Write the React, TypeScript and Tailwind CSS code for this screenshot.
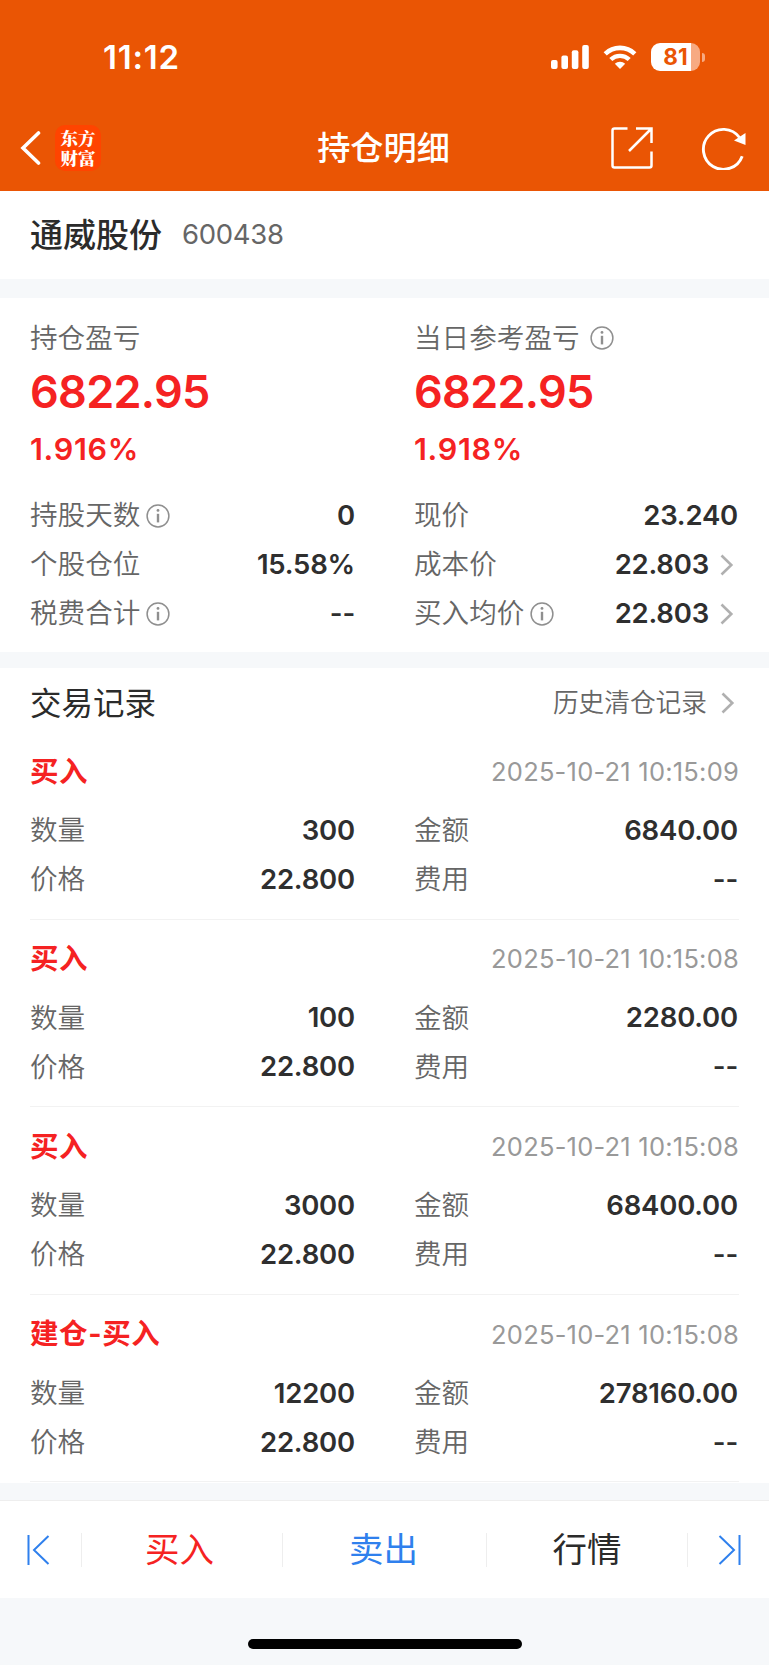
import type { ReactNode } from "react";

type TradeRecord = {
  id: number;
  type: string;
  time: string;
  count: string;
  price: string;
  amount: string;
  fee: string;
};

const records: TradeRecord[] = [
  { id: 1, type: "买入", time: "2025-10-21 10:15:09", count: "300", price: "22.800", amount: "6840.00", fee: "--" },
  { id: 2, type: "买入", time: "2025-10-21 10:15:08", count: "100", price: "22.800", amount: "2280.00", fee: "--" },
  { id: 3, type: "买入", time: "2025-10-21 10:15:08", count: "3000", price: "22.800", amount: "68400.00", fee: "--" },
  { id: 4, type: "建仓-买入", time: "2025-10-21 10:15:08", count: "12200", price: "22.800", amount: "278160.00", fee: "--" },
];

function InfoIcon({ className = "" }: { className?: string }) {
  return (
    <svg className={className} width="24" height="24" viewBox="0 0 24 24" fill="none">
      <circle cx="12" cy="12" r="10.9" stroke="#8f8f8f" strokeWidth="1.5" />
      <circle cx="12" cy="6.4" r="1.4" fill="#8f8f8f" />
      <path d="M12 9.8V18.4" stroke="#8f8f8f" strokeWidth="2.4" />
    </svg>
  );
}

function ChevronIcon({ className = "" }: { className?: string }) {
  return (
    <svg className={className} width="14" height="22" viewBox="0 0 14 22" fill="none">
      <path d="M1.5 1.5L11.3 11L1.5 20.5" stroke="#b0b0b0" strokeWidth="2.6" />
    </svg>
  );
}

function StatusBar() {
  return (
    <div className="flex h-[105px] items-start justify-between pt-[41px] pr-[64px] pl-[103px]">
      <div className="text-[33px] leading-8 font-semibold tracking-[0.8px]">11:12</div>
      <div className="flex h-8 items-center">
        <svg width="38" height="24" viewBox="0 0 38 24" fill="#fff">
          <rect x="0" y="15" width="6.6" height="9" rx="2" />
          <rect x="10.4" y="10.5" width="6.6" height="13.5" rx="2" />
          <rect x="20.8" y="5.3" width="6.6" height="18.7" rx="2" />
          <rect x="31.2" y="0" width="6.6" height="24" rx="2" />
        </svg>
        <svg className="ml-[14px]" width="34" height="24" viewBox="0 0 34 24">
          <path d="M2.2 8.8A21.4 21.4 0 0 1 31.8 8.8" fill="none" stroke="#fff" strokeWidth="4.6" />
          <path d="M7.8 14.5A13.4 13.4 0 0 1 26.2 14.5" fill="none" stroke="#fff" strokeWidth="4.4" />
          <path d="M17 24L11.8 18.8A7.4 7.4 0 0 1 22.2 18.8Z" fill="#fff" />
        </svg>
        <div className="ml-[14px] flex h-7 w-[49px] items-center justify-center rounded-[9px] bg-[linear-gradient(90deg,#fff_82%,#f7aa82_82%)] text-[22.5px] leading-7 font-bold text-[#ea5504]">
          81
        </div>
        <div className="ml-[2px] h-[9px] w-[3px] rounded-r-full bg-[#f7aa82]" />
      </div>
    </div>
  );
}

function NavBar() {
  return (
    <div className="flex h-[86px] items-center justify-between pr-[22px] pl-[20px]">
      <div className="flex w-[160px] items-center">
        <svg width="21" height="34" viewBox="0 0 21 34" fill="none">
          <path d="M18.5 2L3 17L18.5 32" stroke="#fff" strokeWidth="3.6" strokeLinecap="round" />
        </svg>
        <div className="ml-[14px] flex h-[46px] w-[46px] items-center justify-center rounded-[10px] bg-[#ff4400] pb-px font-['Noto_Serif_CJK_SC','Noto_Sans_CJK_SC',serif] text-[17.5px] leading-[19.5px] font-black">
          <p className="w-[36px] text-center break-all">东方财富</p>
        </div>
      </div>
      <div className="text-[33.2px] leading-10 font-medium">持仓明细</div>
      <div className="flex w-[160px] items-center justify-end">
        <svg width="44" height="44" viewBox="0 0 44 44" fill="none" stroke="#fff" strokeWidth="2.5">
          <path d="M17.5 2.5H4.5Q2.5 2.5 2.500 4.500V39.500Q2.500 41.500 4.500 41.500H39.500Q41.500 41.500 41.500 39.500V25.500" />
          <path d="M26 2.500H41.500V17M41 3L19 25" />
        </svg>
        <svg className="ml-[47px]" width="46" height="44" viewBox="0 0 46 44" fill="none">
          <path d="M41.200 30.200A20 20 0 1 1 38.500 11.500" stroke="#fff" strokeWidth="2.900" />
          <path d="M44.500 7V19L33 14.500Z" fill="#fff" />
        </svg>
      </div>
    </div>
  );
}

type FieldProps = {
  label: string;
  value: string;
  info?: boolean;
  arrow?: boolean;
};

function Field({ label, value, info, arrow }: FieldProps) {
  return (
    <div className="flex h-[49px] items-center">
      <span className="pt-px text-[27.6px] font-[350] text-[#666666]">{label}</span>
      {info && <InfoIcon className="mt-px ml-[6px]" />}
      <span className="ml-auto text-[27.5px] font-semibold tracking-[-0.2px] text-[#2f2f2f]">{value}</span>
      {arrow && <ChevronIcon className="mr-[4px] ml-[11px]" />}
    </div>
  );
}

type ProfitProps = {
  label: ReactNode;
  value: string;
  percent: string;
};

function Profit({ label, value, percent }: ProfitProps) {
  return (
    <div>
      <div className="flex h-10 items-center pt-px text-[27.6px] font-[350] text-[#666666]">{label}</div>
      <div className="mt-[6px] text-[45px] leading-[56px] font-semibold tracking-[-0.7px] text-[#f52222]">{value}</div>
      <div className="mt-[9px] text-[30.5px] leading-10 font-semibold tracking-[0.7px] text-[#f52222]">{percent}</div>
    </div>
  );
}

function TradeItem({ item }: { item: TradeRecord }) {
  return (
    <div className="mx-[30px] h-[187.6px] border-b border-[#f2f2f2] pt-[16px]">
      <div className="flex h-[48px] items-center justify-between">
        <span className="text-[28.5px] font-bold tracking-[0.6px] text-[#f52222]">{item.type}</span>
        <span className="text-[25.5px] tracking-[0.22px] text-[#999999]">{item.time}</span>
      </div>
      <div className="mt-[10px] grid grid-cols-[325px_324px] gap-x-[59px]">
        <Field label="数量" value={item.count} />
        <Field label="金额" value={item.amount} />
        <Field label="价格" value={item.price} />
        <Field label="费用" value={item.fee} />
      </div>
    </div>
  );
}

function BottomBar() {
  return (
    <div className="flex h-[98px] items-center border-t border-[#eeeeee] bg-white text-[34.5px]">
      <button className="flex h-[34px] w-[82px] items-center border-r border-[#eeeeee] pl-[27px]">
        <svg width="24" height="30" viewBox="0 0 24 30" fill="none" stroke="#2f80ed" strokeWidth="2">
          <path d="M1.5 0V30M21.5 1L7 15L21.5 29" />
        </svg>
      </button>
      <button className="flex h-[34px] w-[201px] items-center justify-center border-r border-[#eeeeee] pr-[5px] text-[#f52222]">买入</button>
      <button className="flex h-[34px] w-[204px] items-center justify-center border-r border-[#eeeeee] pr-[2px] text-[#2f80ed]">卖出</button>
      <button className="flex h-[34px] w-[201px] items-center justify-center border-r border-[#eeeeee] text-[#2b2b2b]">行情</button>
      <button className="flex h-[34px] flex-1 items-center justify-end pr-[28px]">
        <svg width="24" height="30" viewBox="0 0 24 30" fill="none" stroke="#2f80ed" strokeWidth="2">
          <path d="M22.5 0V30M2.5 1L17 15L2.5 29" />
        </svg>
      </button>
    </div>
  );
}

export default function App() {
  return (
    <div className="flex h-[1665px] w-[769px] flex-col overflow-hidden bg-[#f6f8fa] font-['Inter','Noto_Sans_CJK_SC',sans-serif]">
      <header className="h-[191px] bg-[#ea5504] text-white">
        <StatusBar />
        <NavBar />
      </header>

      <section className="flex h-[88px] items-center bg-white px-[30px]">
        <h1 className="text-[33px] leading-10 font-medium text-[#2b2b2b]">通威股份</h1>
        <span className="ml-[20px] text-[27.5px] tracking-[-0.3px] text-[#666666]">600438</span>
      </section>

      <section className="mt-[19px] h-[354px] bg-white px-[30px] pt-[20px]">
        <div className="grid grid-cols-[325px_324px] gap-x-[59px]">
          <Profit label="持仓盈亏" value="6822.95" percent="1.916%" />
          <Profit
            label={
              <>
                当日参考盈亏
                <InfoIcon className="mb-[2px] ml-[10px]" />
              </>
            }
            value="6822.95"
            percent="1.918%"
          />
        </div>
        <div className="mt-[22px] grid grid-cols-[325px_324px] gap-x-[59px]">
          <Field label="持股天数" value="0" info />
          <Field label="现价" value="23.240" />
          <Field label="个股仓位" value="15.58%" />
          <Field label="成本价" value="22.803" arrow />
          <Field label="税费合计" value="--" info />
          <Field label="买入均价" value="22.803" info arrow />
        </div>
      </section>

      <section className="mt-[16px] h-[815px] bg-white">
        <div className="flex h-[64px] items-center justify-between pt-[7px] pr-[34px] pl-[30px]">
          <h2 className="text-[31.5px] text-[#2b2b2b]">交易记录</h2>
          <div className="flex items-center text-[25.7px] font-[350] text-[#666666]">
            历史清仓记录
            <ChevronIcon className="ml-[14px]" />
          </div>
        </div>
        {records.map((r) => (
          <TradeItem key={r.id} item={r} />
        ))}
      </section>

      <footer className="mt-[17px]">
        <BottomBar />
        <div className="mx-auto mt-[41px] h-[10px] w-[274px] rounded-full bg-black" />
      </footer>
    </div>
  );
}
